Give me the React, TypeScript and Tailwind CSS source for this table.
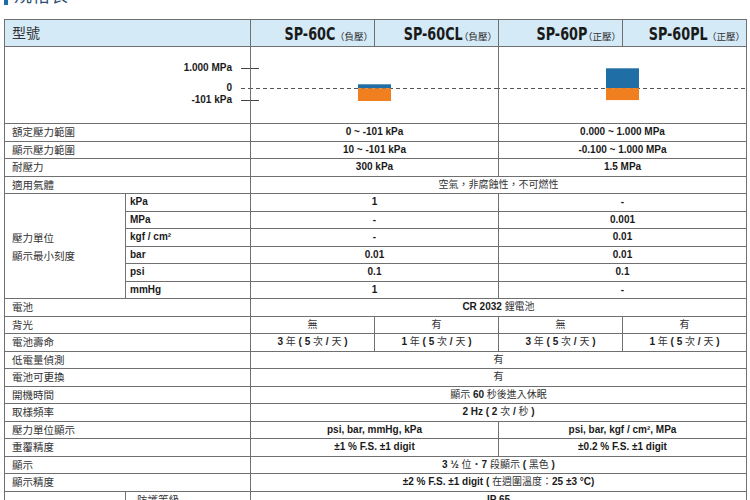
import React from "react";

const CJK = /[\u2E80-\u9FFF\u3000-\u303F\uFF00-\uFFEF\u30FB]/;
const CJK_SPLIT = /([\u2E80-\u9FFF\u3000-\u303F\uFF00-\uFFEF\u30FB]+)/;

function Mixed({ text }: { text: string }) {
  const parts = text.split(CJK_SPLIT);
  return (
    <>
      {parts.map((p, i) =>
        CJK.test(p) ? (
          <span key={i} className="font-normal text-[#333]">
            {p}
          </span>
        ) : (
          <span key={i}>{p}</span>
        )
      )}
    </>
  );
}

function Label({ children, className = "" }: { children: React.ReactNode; className?: string }) {
  return (
    <div className={`col-span-2 bg-white flex items-center pl-[7px] text-[10.5px] leading-none text-[#333] ${className}`}>
      {children}
    </div>
  );
}

function Data({ text, span = 2 }: { text: string; span?: 1 | 2 | 4 }) {
  const cls = span === 4 ? "col-span-4" : span === 2 ? "col-span-2" : "col-span-1";
  return (
    <div className={`${cls} bg-white flex items-center justify-center text-[10px] leading-none font-bold text-[#1a1a1a] whitespace-pre`}>
      <Mixed text={text} />
    </div>
  );
}

function Unit({ text }: { text: string }) {
  return (
    <div className="col-start-2 bg-white flex items-center pl-[4px] text-[10px] leading-none font-bold text-[#1a1a1a]">
      {text}
    </div>
  );
}

function ModelHead({ name, note, gap }: { name: string; note: string; gap: string }) {
  return (
    <div className="bg-[#d4eaf7] flex items-center justify-end pr-[2px] pt-[1px] overflow-hidden">
      <div className="flex items-baseline">
        <span className="origin-right scale-x-[0.79] font-['Liberation_Sans_Narrow','DejaVu_Sans_Condensed',sans-serif] font-bold text-[18px] leading-none text-[#1a1a1a]">
          {name}
        </span>
        <span className={`${gap} text-[9.5px] leading-none text-[#333]`}>（{note}）</span>
      </div>
    </div>
  );
}

export default function App() {
  return (
    <div className="w-[750px] h-[500px] overflow-hidden bg-white font-['Liberation_Sans','Noto_Sans_CJK_TC',sans-serif]">
      <div className="h-[19px] overflow-hidden">
        <div className="-mt-[14px] flex items-center gap-[6px] pl-[4px] h-[19px]">
          <div className="w-[4px] h-[19px] bg-[#1d6bab]" />
          <span className="text-[18px] leading-none text-[#2d4f73]">規格表</span>
        </div>
      </div>

      <div className="ml-[4px] w-fit grid grid-cols-[120px_124px_123px_123px_123px_123px] grid-rows-[26px_76px_repeat(22,16.5px)] gap-px bg-[#707070] border border-[#707070]">
        {/* header */}
        <div className="col-span-2 bg-[#d4eaf7] flex items-center pl-[7px] text-[14px] leading-none text-[#333]">型號</div>
        <ModelHead name="SP-60C" note="負壓" gap="-mr-[1px]" />
        <ModelHead name="SP-60CL" note="負壓" gap="-ml-[4px] -mr-[1px]" />
        <ModelHead name="SP-60P" note="正壓" gap="-ml-[4px] -mr-[1px]" />
        <ModelHead name="SP-60PL" note="正壓" gap="-ml-[1px] -mr-[1px]" />

        {/* diagram */}
        <div className="col-span-2 bg-white relative">
          <span className="absolute right-[18px] top-[15px] text-[10px] leading-[12px] font-bold text-[#1a1a1a]">1.000 MPa</span>
          <span className="absolute right-[18px] top-[35px] text-[10px] leading-[12px] font-bold text-[#1a1a1a]">0</span>
          <span className="absolute right-[18px] top-[47px] text-[10px] leading-[12px] font-bold text-[#1a1a1a]">-101 kPa</span>
          <svg className="absolute right-0 top-0" width="9" height="76">
            <line x1="0" y1="21.5" x2="9" y2="21.5" stroke="#444" strokeWidth="1" />
            <line x1="0" y1="53.5" x2="9" y2="53.5" stroke="#444" strokeWidth="1" />
            <line x1="0" y1="41.5" x2="9" y2="41.5" stroke="#555" strokeWidth="1" strokeDasharray="4 3" />
          </svg>
        </div>
        <div className="col-span-2 bg-white">
          <svg width="247" height="76" className="block">
            <line x1="0" y1="21.5" x2="8" y2="21.5" stroke="#444" strokeWidth="1" />
            <line x1="0" y1="53.5" x2="8" y2="53.5" stroke="#444" strokeWidth="1" />
            <line x1="0" y1="41.5" x2="247" y2="41.5" stroke="#555" strokeWidth="1" strokeDasharray="4 3" strokeDashoffset="2" />
            <rect x="107" y="37.3" width="33" height="4" fill="#1f6ea6" />
            <rect x="107" y="41.3" width="33" height="12.7" fill="#f07f1f" />
          </svg>
        </div>
        <div className="col-span-2 bg-white">
          <svg width="247" height="76" className="block">
            <line x1="0" y1="41.5" x2="247" y2="41.5" stroke="#555" strokeWidth="1" strokeDasharray="4 3" strokeDashoffset="3" />
            <rect x="107" y="21.3" width="33" height="19.8" fill="#1f6ea6" />
            <rect x="107" y="41.1" width="33" height="12" fill="#f07f1f" />
          </svg>
        </div>

        <Label>額定壓力範圍</Label>
        <Data text="0 ~ -101 kPa" />
        <Data text="0.000 ~ 1.000 MPa" />

        <Label>顯示壓力範圍</Label>
        <Data text="10 ~ -101 kPa" />
        <Data text="-0.100 ~ 1.000 MPa" />

        <Label>耐壓力</Label>
        <Data text="300 kPa" />
        <Data text="1.5 MPa" />

        <Label>適用氣體</Label>
        <Data text="空氣，非腐蝕性，不可燃性" span={4} />

        <div className="col-start-1 row-span-6 bg-white flex flex-col justify-center pl-[7px] text-[10.5px] leading-[18px] text-[#333] pt-[1px]">
          <span>壓力單位</span>
          <span>顯示最小刻度</span>
        </div>
        <Unit text="kPa" />
        <Data text="1" />
        <Data text="-" />
        <Unit text="MPa" />
        <Data text="-" />
        <Data text="0.001" />
        <Unit text="kgf / cm²" />
        <Data text="-" />
        <Data text="0.01" />
        <Unit text="bar" />
        <Data text="0.01" />
        <Data text="0.01" />
        <Unit text="psi" />
        <Data text="0.1" />
        <Data text="0.1" />
        <Unit text="mmHg" />
        <Data text="1" />
        <Data text="-" />

        <Label>電池</Label>
        <Data text="CR 2032 鋰電池" span={4} />

        <Label>背光</Label>
        <Data text="無" span={1} />
        <Data text="有" span={1} />
        <Data text="無" span={1} />
        <Data text="有" span={1} />

        <Label>電池壽命</Label>
        <Data text="3 年 ( 5 次 / 天 )" span={1} />
        <Data text="1 年 ( 5 次 / 天 )" span={1} />
        <Data text="3 年 ( 5 次 / 天 )" span={1} />
        <Data text="1 年 ( 5 次 / 天 )" span={1} />

        <Label>低電量偵測</Label>
        <Data text="有" span={4} />

        <Label>電池可更換</Label>
        <Data text="有" span={4} />

        <Label>開機時間</Label>
        <Data text="顯示 60 秒後進入休眠" span={4} />

        <Label>取樣頻率</Label>
        <Data text="2 Hz ( 2 次 / 秒 )" span={4} />

        <Label>壓力單位顯示</Label>
        <Data text="psi, bar, mmHg, kPa" />
        <Data text="psi, bar, kgf / cm², MPa" />

        <Label>重覆精度</Label>
        <Data text="±1 % F.S. ±1 digit" />
        <Data text="±0.2 % F.S. ±1 digit" />

        <Label>顯示</Label>
        <Data text="3 ½ 位・7 段顯示 ( 黑色 )" span={4} />

        <Label>顯示精度</Label>
        <Data text="±2 % F.S. ±1 digit ( 在週圍溫度：25 ±3 °C)" span={4} />

        <div className="col-start-1 bg-white" />
        <div className="col-start-2 bg-white flex items-center pl-[11px] text-[10.5px] leading-none text-[#333]">防護等級</div>
        <Data text="IP 65" span={4} />
      </div>
    </div>
  );
}
